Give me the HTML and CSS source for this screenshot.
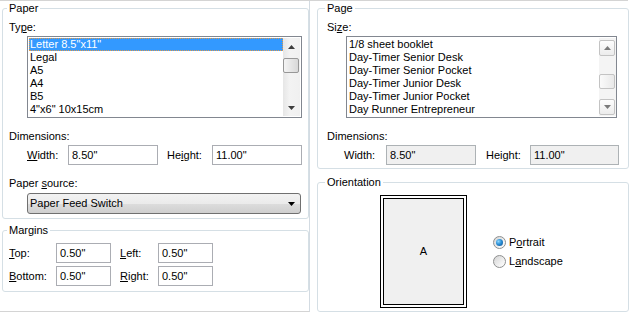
FILE: index.html
```html
<!DOCTYPE html>
<html lang="en">
<head>
    <meta charset="UTF-8">
    <title>Page Setup</title>
    <link rel="stylesheet" href="styles.css">
</head>
<body>
    <div class="dialog">
        <div class="col left">
            <fieldset class="group paper">
                <legend>Paper</legend>
                <div class="label">Ty<u>p</u>e:</div>
                <div class="listbox type-list">
                    <ul class="items">
                        <li class="selected">Letter 8.5"x11"</li>
                        <li>Legal</li>
                        <li>A5</li>
                        <li>A4</li>
                        <li>B5</li>
                        <li>4"x6" 10x15cm</li>
                    </ul>
                    <div class="scrollbar">
                        <div class="sb-btn">
                            <svg width="7" height="4" viewBox="0 0 7 4"><polygon points="0,4 3.5,0 7,4" fill="#3d3d3d"/></svg>
                        </div>
                        <div class="sb-track"><div class="thumb"></div></div>
                        <div class="sb-btn">
                            <svg width="7" height="4" viewBox="0 0 7 4"><polygon points="0,0 7,0 3.5,4" fill="#3d3d3d"/></svg>
                        </div>
                    </div>
                </div>

                <div class="label section">Dimensions:</div>
                <div class="field-row dims">
                    <span class="field-label lw"><u>W</u>idth:</span>
                    <span class="input">8.50"</span>
                    <span class="field-label lh">He<u>i</u>ght:</span>
                    <span class="input">11.00"</span>
                </div>

                <div class="label section">Paper <u>s</u>ource:</div>
                <div class="select">
                    <span>Paper Feed Switch</span>
                    <svg width="7" height="4" viewBox="0 0 7 4"><polygon points="0,0 7,0 3.5,4" fill="#000"/></svg>
                </div>
            </fieldset>

            <fieldset class="group margins">
                <legend>Margins</legend>
                <div class="field-row">
                    <span class="field-label mt"><u>T</u>op:</span>
                    <span class="input small">0.50"</span>
                    <span class="field-label ml"><u>L</u>eft:</span>
                    <span class="input small">0.50"</span>
                </div>
                <div class="field-row second">
                    <span class="field-label mt"><u>B</u>ottom:</span>
                    <span class="input small">0.50"</span>
                    <span class="field-label ml"><u>R</u>ight:</span>
                    <span class="input small">0.50"</span>
                </div>
            </fieldset>
        </div>

        <div class="col right">
            <fieldset class="group page">
                <legend>Page</legend>
                <div class="label">Si<u>z</u>e:</div>
                <div class="listbox size-list">
                    <ul class="items">
                        <li>1/8 sheet booklet</li>
                        <li>Day-Timer Senior Desk</li>
                        <li>Day-Timer Senior Pocket</li>
                        <li>Day-Timer Junior Desk</li>
                        <li>Day-Timer Junior Pocket</li>
                        <li>Day Runner Entrepreneur</li>
                    </ul>
                    <div class="scrollbar boxed">
                        <div class="sb-btn">
                            <svg width="7" height="4" viewBox="0 0 7 4"><polygon points="0,4 3.5,0 7,4" fill="#7a7a7a"/></svg>
                        </div>
                        <div class="sb-track"><div class="thumb"></div></div>
                        <div class="sb-btn">
                            <svg width="7" height="4" viewBox="0 0 7 4"><polygon points="0,0 7,0 3.5,4" fill="#7a7a7a"/></svg>
                        </div>
                    </div>
                </div>

                <div class="label section">Dimensions:</div>
                <div class="field-row dims">
                    <span class="field-label rw">Width:</span>
                    <span class="input disabled">8.50"</span>
                    <span class="field-label rh">Height:</span>
                    <span class="input disabled narrow">11.00"</span>
                </div>
            </fieldset>

            <fieldset class="group orientation">
                <legend>Orientation</legend>
                <div class="orient-body">
                    <div class="sheet">
                        <div class="sheet-inner">A</div>
                    </div>
                    <div class="radios">
                        <div class="radio-row">
                            <span class="radio checked"></span>
                            <span>P<u>o</u>rtrait</span>
                        </div>
                        <div class="radio-row">
                            <span class="radio"></span>
                            <span>L<u>a</u>ndscape</span>
                        </div>
                    </div>
                </div>
            </fieldset>
        </div>
    </div>
</body>
</html>
```

FILE: styles.css
```css
body {
    margin: 0;
    background: #fff;
    color: #000;
    font-family: "Liberation Sans", Arial, sans-serif;
    font-size: 11px;
    line-height: 13px;
}

.dialog {
    display: flex;
    width: 628px;
    height: 312px;
    box-sizing: border-box;
    border-top: 1px solid #d4d4d4;
}

.col {
    display: flex;
    flex-direction: column;
    box-sizing: border-box;
    border-right: 1px solid #d3dbe2;
}

.left {
    width: 311px;
    padding-left: 2px;
    border-bottom: 1px solid #d4d4d4;
}

.right {
    flex: 1;
    padding-left: 7px;
}

/* group boxes */
.group {
    margin: 0;
    border: 1px solid #d5dfe5;
    border-radius: 3px;
    min-width: 0;
}

.group legend {
    padding: 0 2px;
    margin-left: -2px;
    line-height: 13px;
}

.paper {
    margin-top: 1px;
    padding: 6px 6px 4px;
}

.margins {
    margin-top: 5px;
    padding: 6px 6px 5px;
}

.page {
    margin-top: 1px;
    padding: 6px 9px 3px;
}

.orientation {
    flex: 1;
    margin-top: 7px;
    padding: 6px 9px 0;
}

.label.section {
    margin-top: 12px;
}

/* list boxes */
.listbox {
    display: flex;
    margin-top: 2px;
    height: 82px;
    box-sizing: border-box;
    border: 1px solid #828790;
    background: #fff;
}

.type-list {
    width: 275px;
    margin-left: 18px;
    padding: 1px;
}

.size-list {
    width: 271px;
    margin-left: 19px;
    padding: 1px 0 1px 1px;
}

.items {
    flex: 1;
    list-style: none;
    margin: 0;
    padding: 0;
}

.items li {
    height: 13px;
    padding-left: 1px;
    white-space: nowrap;
}

.size-list .items li {
    padding-left: 1px;
}

.items li.selected {
    background: #3399ff;
    color: #fff;
    outline: 1px dotted #e29a4a;
    outline-offset: -1px;
}

.scrollbar {
    display: flex;
    flex-direction: column;
    width: 17px;
    background: linear-gradient(to right, #e6e6e6, #f3f3f3 40%, #f0f0f0);
}

.sb-btn {
    height: 17px;
    display: flex;
    align-items: center;
    justify-content: center;
}

.sb-track {
    flex: 1;
}

.thumb {
    height: 15px;
    margin: 3px 1px 0 0;
    border: 1px solid #979797;
    border-radius: 2px;
    box-sizing: border-box;
    background: linear-gradient(to right, #f4f4f4, #e6e6e6 50%, #d8d8d8);
}

.scrollbar.boxed {
    width: 17px;
    padding: 2px 0 1px;
    box-sizing: border-box;
    background: #f4f4f4;
}

.boxed .sb-btn {
    height: 16px;
    width: 16px;
    border: 1px solid #c3c3c3;
    border-radius: 2px;
    box-sizing: border-box;
    background: linear-gradient(#fdfdfd, #ececec);
}

.boxed .thumb {
    width: 16px;
    margin: 18px 0 0;
    border-color: #c3c3c3;
    background: linear-gradient(to right, #fafafa, #e9e9e9);
}

/* text fields */
.field-row {
    display: flex;
    align-items: center;
}

.field-row.dims {
    margin-top: 2px;
}

.field-row.second {
    margin-top: 3px;
}

.field-label {
    flex: none;
}

.lw {
    width: 41px;
    margin-left: 18px;
}

.lh {
    width: 45px;
    margin-left: 9px;
}

.mt {
    width: 47px;
}

.ml {
    width: 38px;
    margin-left: 9px;
}

.rw {
    width: 42px;
    margin-left: 17px;
}

.rh {
    width: 44px;
    margin-left: 10px;
}

.input {
    flex: none;
    width: 90px;
    height: 20px;
    box-sizing: border-box;
    padding: 3px 3px 0;
    border: 1px solid #abadb3;
    background: #fff;
}

.input.small {
    width: 55px;
}

.input.disabled {
    background: #f0f0f0;
    border-color: #adb2b5;
}

.input.narrow {
    width: 89px;
}

.select {
    display: flex;
    align-items: center;
    justify-content: space-between;
    width: 274px;
    height: 21px;
    margin: 3px 0 0 18px;
    padding: 0 5px 0 2px;
    box-sizing: border-box;
    border: 1px solid #707070;
    border-radius: 3px;
    background: linear-gradient(#f2f2f2 0%, #ebebeb 50%, #dddddd 51%, #cfcfcf 100%);
}

/* orientation */
.orient-body {
    display: flex;
    align-items: center;
}

.sheet {
    width: 81px;
    height: 107px;
    margin-left: 53px;
    padding: 2px;
    border: 1px solid #000;
    background: #fff;
}

.sheet-inner {
    display: flex;
    align-items: center;
    justify-content: center;
    height: 100%;
    box-sizing: border-box;
    border: 1px solid #000;
    background: #f0f0f0;
}

.radios {
    margin-left: 26px;
}

.radio-row {
    display: flex;
    align-items: center;
    height: 19px;
}

.radio {
    position: relative;
    width: 13px;
    height: 13px;
    margin-right: 3px;
    box-sizing: border-box;
    border: 1px solid #8e8f8f;
    border-radius: 50%;
    background: linear-gradient(135deg, #d4d4d4, #f4f4f4 70%, #ffffff);
}

.radio.checked::after {
    content: "";
    position: absolute;
    left: 2px;
    top: 2px;
    width: 7px;
    height: 7px;
    border-radius: 50%;
    background: radial-gradient(circle at 35% 35%, #8fd8ff, #2b8fd6 45%, #0c4a8a);
}
```
